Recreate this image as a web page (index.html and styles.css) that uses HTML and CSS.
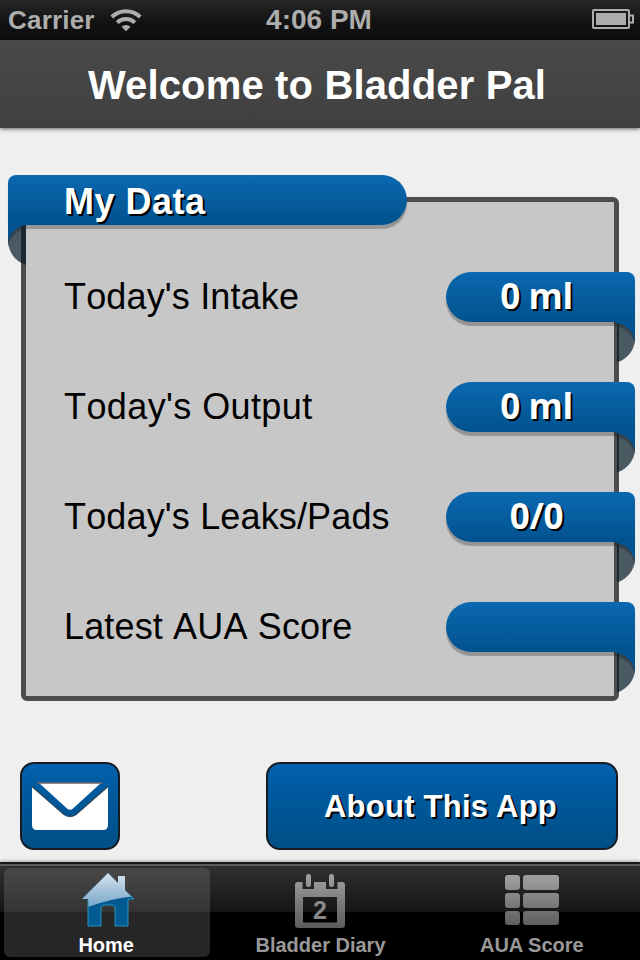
FILE: index.html
```html
<!DOCTYPE html>
<html lang="en">
<head>
  <meta charset="UTF-8">
  <meta name="viewport" content="width=device-width, initial-scale=1.0">
  <title>Bladder Pal</title>
  <link rel="stylesheet" href="styles.css">
</head>
<body>
  <!-- Status bar -->
  <div class="status-bar">
    <div class="status-left">
      <span class="carrier">Carrier</span>
      <svg class="wifi" width="32" height="24" viewBox="0 0 32 24">
        <g fill="none" stroke="#adadad" stroke-width="4">
          <path d="M1.8 9 A20.5 20.5 0 0 1 30.2 9"/>
          <path d="M7.2 14.6 A12.6 12.6 0 0 1 24.8 14.6"/>
        </g>
        <path fill="#adadad" d="M11.5 18.8 A6.4 6.4 0 0 1 20.5 18.8 L16 23.3 Z"/>
      </svg>
    </div>
    <span class="clock">4:06 PM</span>
    <div class="status-right">
      <svg width="42" height="20" viewBox="0 0 42 20">
        <rect x="1" y="1" width="36" height="18" rx="1" fill="none" stroke="#adadad" stroke-width="2"/>
        <rect x="4" y="4" width="30" height="12" fill="#adadad"/>
        <path d="M38 6.5 H41 V13.5 H38" fill="none" stroke="#adadad" stroke-width="2"/>
      </svg>
    </div>
  </div>

  <!-- Title -->
  <header class="header">
    <h1>Welcome to Bladder Pal</h1>
  </header>

  <main class="content">
    <!-- My Data panel -->
    <section class="panel">
      <h2 class="title-ribbon">
        <svg class="fold" width="19" height="41" viewBox="0 0 19 41">
          <path d="M0 18 C1 29 8 38 18 41 V0 H0 Z" fill="#4b5963"/>
          <path d="M13 0 H18 V41 L13 38.7 Z" fill="#1c2831"/>
          <path d="M0 0 H18 V5 C9 6 2 13 0 23 Z" fill="#1b2730" opacity=".45"/>
          <path d="M0 0 H18 V1 C9 2 1 9 0 19 Z" fill="#015391"/>
        </svg>
        <span>My Data</span>
      </h2>

      <div class="row">
        <span class="label">Today's Intake</span>
        <div class="value">
          <svg class="fold" width="19" height="41" viewBox="0 0 19 41">
            <path d="M19 18 C18 29 11 37 2 40 V0 H19 Z" fill="#4b5963"/>
            <path d="M1 0 H3 V40 H1 Z" fill="#1c2831"/>
            <path d="M19 0 H1 V5 C10 6 17 13 19 23 Z" fill="#1b2730" opacity=".45"/>
            <path d="M19 0 H0 V1 C10 2 17 9 19 19 Z" fill="#015391"/>
          </svg>
          <span>0 ml</span>
        </div>
      </div>
      <div class="row">
        <span class="label output">Today's Output</span>
        <div class="value">
          <svg class="fold" width="19" height="41" viewBox="0 0 19 41">
            <path d="M19 18 C18 29 11 37 2 40 V0 H19 Z" fill="#4b5963"/>
            <path d="M1 0 H3 V40 H1 Z" fill="#1c2831"/>
            <path d="M19 0 H1 V5 C10 6 17 13 19 23 Z" fill="#1b2730" opacity=".45"/>
            <path d="M19 0 H0 V1 C10 2 17 9 19 19 Z" fill="#015391"/>
          </svg>
          <span>0 ml</span>
        </div>
      </div>
      <div class="row">
        <span class="label">Today's Leaks/Pads</span>
        <div class="value">
          <svg class="fold" width="19" height="41" viewBox="0 0 19 41">
            <path d="M19 18 C18 29 11 37 2 40 V0 H19 Z" fill="#4b5963"/>
            <path d="M1 0 H3 V40 H1 Z" fill="#1c2831"/>
            <path d="M19 0 H1 V5 C10 6 17 13 19 23 Z" fill="#1b2730" opacity=".45"/>
            <path d="M19 0 H0 V1 C10 2 17 9 19 19 Z" fill="#015391"/>
          </svg>
          <span>0/0</span>
        </div>
      </div>
      <div class="row">
        <span class="label">Latest AUA Score</span>
        <div class="value">
          <svg class="fold" width="19" height="41" viewBox="0 0 19 41">
            <path d="M19 18 C18 29 11 37 2 40 V0 H19 Z" fill="#4b5963"/>
            <path d="M1 0 H3 V40 H1 Z" fill="#1c2831"/>
            <path d="M19 0 H1 V5 C10 6 17 13 19 23 Z" fill="#1b2730" opacity=".45"/>
            <path d="M19 0 H0 V1 C10 2 17 9 19 19 Z" fill="#015391"/>
          </svg>
        </div>
      </div>
    </section>

    <!-- Buttons -->
    <div class="buttons">
      <button class="btn mail-btn" aria-label="Mail">
        <svg width="76" height="48" viewBox="0 0 76 48">
          <path d="M6 0 H70 L41 26.5 Q38 29 35 26.5 Z" fill="#fff"/>
          <path d="M5 .8 H71" stroke="#5b6470" stroke-width="1.8"/>
          <path d="M0 5 L32 33 Q38 37 44 33 L76 5 V43 Q76 48 71 48 H5 Q0 48 0 43 Z" fill="#fff"/>
          <path d="M0 4.5 L32 32.5 Q38 36.5 44 32.5 L76 4.5" fill="none" stroke="#34404d" stroke-width="1.5" opacity=".7"/>
        </svg>
      </button>
      <button class="btn about-btn">About This App</button>
    </div>
  </main>

  <!-- Tab bar -->
  <nav class="tab-bar">
    <a class="tab active">
      <svg width="56" height="60" viewBox="-1 0 56 60">
        <defs>
          <linearGradient id="shine" x1="0" y1="0" x2="0" y2="1">
            <stop offset="0" stop-color="#e6edf3"/>
            <stop offset="1" stop-color="#6d9fc5"/>
          </linearGradient>
          <clipPath id="house">
            <path d="M28 5 L38 15 V8 H45 V22 L54 31 H48 V58 H35 V40 Q35 37 32 37 H24 Q21 37 21 40 V58 H8 V31 H2 Z"/>
          </clipPath>
        </defs>
        <g clip-path="url(#house)">
          <rect width="56" height="60" fill="#045b93"/>
          <path d="M0 0 H56 V28 Q32 30 8 39 L0 42 Z" fill="url(#shine)"/>
        </g>
        <path d="M8 32 V58 H21 V40 Q21 37 24 37 H32 Q35 37 35 40 V58 H48 V31 H54 L50 27" fill="none" stroke="#2496bd" stroke-width="1"/>
      </svg>
      <span>Home</span>
    </a>
    <a class="tab">
      <svg width="56" height="60" viewBox="0 0 56 60">
        <defs>
          <linearGradient id="grey" gradientUnits="userSpaceOnUse" x1="0" y1="5" x2="0" y2="59">
            <stop offset="0" stop-color="#a3a3a3"/>
            <stop offset="1" stop-color="#5c5c5c"/>
          </linearGradient>
        </defs>
        <path fill="url(#grey)" fill-rule="evenodd" d="M6 14 H10.5 V21 H22 V14 H34 V21 H45.5 V14 H50 Q53 14 53 17 V57 Q53 60 50 60 H6 Q3 60 3 57 V17 Q3 14 6 14 Z M11 29 V54.5 H45 V29 Z"/>
        <rect x="14" y="6" width="5" height="13" rx="2.5" fill="url(#grey)"/>
        <rect x="37" y="6" width="5" height="13" rx="2.5" fill="url(#grey)"/>
        <text class="day" x="28" y="51" text-anchor="middle">2</text>
      </svg>
      <span>Bladder Diary</span>
    </a>
    <a class="tab score">
      <svg width="56" height="60" viewBox="0 0 56 60">
        <g fill="url(#grey)">
          <rect x="1" y="7" width="15" height="15" rx="3"/>
          <rect x="19" y="7" width="36" height="15" rx="3"/>
          <rect x="1" y="25" width="15" height="15" rx="3"/>
          <rect x="19" y="25" width="36" height="15" rx="3"/>
          <rect x="1" y="43" width="15" height="14" rx="3"/>
          <rect x="19" y="43" width="36" height="14" rx="3"/>
        </g>
      </svg>
      <span>AUA Score</span>
    </a>
  </nav>
</body>
</html>
```

FILE: styles.css
```css
* {
  margin: 0;
  padding: 0;
  box-sizing: border-box;
}

body {
  width: 640px;
  height: 960px;
  display: flex;
  flex-direction: column;
  overflow: hidden;
  font-family: "Liberation Sans", Arial, sans-serif;
  background: #efefef;
}

/* Status bar */
.status-bar {
  height: 40px;
  display: grid;
  grid-template-columns: 1fr auto 1fr;
  align-items: center;
  padding: 0 6px 0 8px;
  background: linear-gradient(#262626, #111 60%, #0e0e0e);
  color: #adadad;
  font-weight: bold;
}

.status-left {
  display: flex;
  align-items: center;
  gap: 15px;
}

.carrier {
  font-size: 26px;
  letter-spacing: 0.2px;
}

.clock {
  font-size: 28px;
  margin-right: 4px;
}

.status-right {
  display: flex;
  justify-content: flex-end;
  padding-bottom: 2px;
}

/* Title */
.header {
  height: 88px;
  display: flex;
  align-items: center;
  justify-content: center;
  padding: 2px 6px 0 0;
  background: linear-gradient(#494949, #404040);
  box-shadow: 0 1px 4px rgba(0, 0, 0, 0.6);
}

.header h1 {
  color: #fff;
  font-size: 40px;
  line-height: 46px;
  letter-spacing: 0.15px;
}

.content {
  flex: 1;
  padding: 69px 21px 0;
}

/* Panel */
.panel {
  height: 504px;
  border: 5px solid #4d4d4d;
  border-radius: 6px;
  background: #c7c7c7;
}

.title-ribbon {
  position: relative;
  width: 399px;
  height: 50px;
  margin: -27px 0 0 -18px;
  padding-left: 56px;
  border-radius: 8px 25px 25px 0;
  background: linear-gradient(#0b68b0, #01528d);
  box-shadow: 0 4px 1px rgba(0, 0, 0, 0.25);
  color: #fff;
  font-size: 36px;
  line-height: 54px;
  letter-spacing: 0.5px;
  text-shadow: 2px 2px 0 #000;
}

.title-ribbon .fold {
  position: absolute;
  left: 0;
  top: 49px;
}

.row {
  height: 50px;
  display: flex;
  justify-content: space-between;
  margin: 0 -21px 60px 38px;
}

.title-ribbon + .row {
  margin-top: 47px;
}

.label {
  font-size: 36px;
  font-kerning: none;
  line-height: 50px;
  letter-spacing: 0.15px;
  color: #000;
}

.output {
  letter-spacing: 0.4px;
}

.value {
  position: relative;
  width: 189px;
  border-radius: 25px 8px 0 25px;
  background: linear-gradient(#0b68b0, #01528d);
  box-shadow: 0 4px 1px rgba(0, 0, 0, 0.25);
  color: #fff;
  font-family: "Open Sans", sans-serif;
  font-size: 35px;
  font-weight: bold;
  line-height: 47px;
  letter-spacing: -0.4px;
  text-align: center;
  padding-right: 8px;
  text-shadow: 2px 2px 0 #000;
}

.value .fold {
  position: absolute;
  right: 0;
  top: 50px;
}

/* Buttons */
.buttons {
  display: flex;
  justify-content: space-between;
  margin: 61px 1px 0 -1px;
}

.btn {
  height: 88px;
  display: flex;
  align-items: center;
  justify-content: center;
  border: 2px solid #151c24;
  border-radius: 14px;
  background: linear-gradient(#0361af, #005a9f 30%, #004f86);
  color: #fff;
}

.mail-btn {
  width: 100px;
}

.about-btn {
  width: 352px;
  padding: 1px 3px 0 0;
  font: bold 31px "Liberation Sans", Arial, sans-serif;
  letter-spacing: 0.25px;
  text-shadow: 2px 2px 0 #000;
}

/* Tab bar */
.tab-bar {
  height: 98px;
  display: grid;
  grid-template-columns: repeat(3, 1fr);
  border-top: 2px solid #161616;
  background: linear-gradient(#5a5a5a 0 2px, #303030 2px, #151515 48px, #000 48px);
  box-shadow: 0 -1px 3px rgba(0, 0, 0, 0.3);
}

.tab {
  display: flex;
  flex-direction: column;
  align-items: center;
  margin: 4px 3px 4px 4px;
  border-radius: 6px;
  color: #999;
  font-size: 20px;
  font-weight: bold;
}

.tab span {
  line-height: 24px;
  margin-top: 5px;
}

.active {
  background: linear-gradient(#484848, #343434 44px, #262626 44px);
  color: #fff;
}

.active span {
  padding-right: 2px;
}

.score {
  padding-right: 4px;
}

.day {
  font-size: 25px;
  font-weight: bold;
  fill: #888;
}
```
